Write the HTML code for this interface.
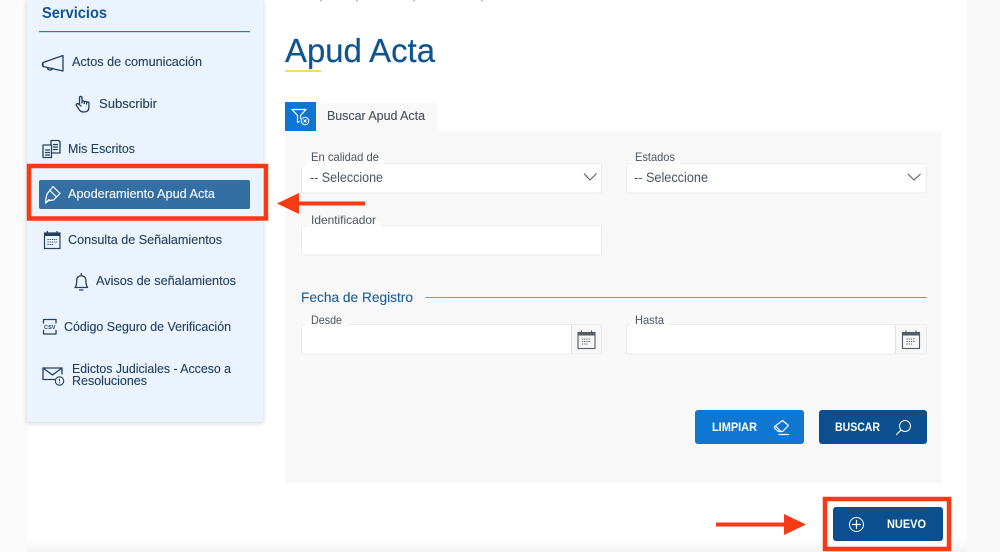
<!DOCTYPE html>
<html lang="es">
<head>
<meta charset="utf-8">
<title>Apud Acta</title>
<style>
html,body{margin:0;padding:0;width:1000px;height:552px;overflow:hidden;background:#fff}
svg{display:block;position:absolute;left:0;top:0}
text{font-family:"Liberation Sans",sans-serif;}
.m{font-size:13px;fill:#24405f;stroke:#24405f;stroke-width:.12}
.l{font-size:12px;fill:#4d5560}
.s{font-size:13.5px;fill:#4a5460}
.b{font-size:12px;font-weight:bold;fill:#fff}
.i{fill:none;stroke:#24405f;stroke-width:1.3;stroke-linejoin:round;stroke-linecap:round}
.g{fill:none;stroke:#5a6068;stroke-width:1.1}
.w{fill:none;stroke:#fff;stroke-width:1.2;stroke-linecap:round;stroke-linejoin:round}
</style>
</head>
<body>
<svg width="1000" height="552" viewBox="0 0 1000 552" xmlns="http://www.w3.org/2000/svg">
<defs>
<filter id="sh" x="-10%" y="-5%" width="120%" height="110%"><feGaussianBlur stdDeviation="2.5"/></filter>
<linearGradient id="bt" x1="0" y1="0" x2="0" y2="1"><stop offset="0" stop-color="#f6f6f6" stop-opacity="0"/><stop offset="1" stop-color="#f3f3f3"/></linearGradient>
<g id="cal">
<rect x="0.5" y="2.5" width="17" height="16" fill="none" stroke="#555c64" stroke-width="1.1"/>
<rect x="0.5" y="2.5" width="17" height="3" fill="#555c64"/>
<path d="M4 0.5v3M14 0.5v3" stroke="#555c64" stroke-width="1.1"/>
<path d="M4.500 9h9M4.500 11.500h9M4.500 14h6" stroke="#555c64" stroke-width="1.1" stroke-dasharray="1.200 1"/>
</g>
</defs>

<!-- page backdrop -->
<rect x="0" y="0" width="27" height="552" fill="#fafafa"/>
<rect x="967" y="0" width="33" height="552" fill="#f9f9f9"/>
<rect x="27" y="538" width="940" height="14" fill="url(#bt)"/>

<!-- breadcrumb remnants -->
<path d="M321 0v1.500M357 0v1.500M414 0v1.500M482 0v1.500" stroke="#8a8f96" stroke-width="1"/>

<!-- sidebar -->
<rect x="27" y="0" width="236" height="423" fill="#9aa3ad" opacity=".5" filter="url(#sh)"/>
<rect x="27" y="0" width="236" height="422" fill="#ebf4fe"/>
<text x="42" y="18" font-size="16" font-weight="bold" fill="#12558f" textLength="65" lengthAdjust="spacingAndGlyphs">Servicios</text>
<rect x="39" y="31" width="211" height="1.200" fill="#2f78b0"/>

<!-- megaphone -->
<path class="i" d="M43 62.500 63 55.500v15.500L43 66.500zM43 62.500c-.8 1-.8 3 0 4M47.500 67.500c0 3 4.500 3.500 5 .8"/>
<text class="m" x="72" y="66" textLength="130" lengthAdjust="spacingAndGlyphs">Actos de comunicación</text>

<!-- hand -->
<path class="i" d="M79.500 104V97.800c0-1.800 2.500-1.800 2.500 0v5.200M82 102c0-1.500 2.300-1.500 2.300 0v1.500M84.300 102.500c0-1.500 2.300-1.500 2.300 0v1.500M86.600 103c0-1.400 2.300-1.400 2.300 0v4c0 3.500-2 5-5 5-2.800 0-4-1-5.500-3.500l-2-3c-.8-1.500 1-2.500 2-1.500l2.700 2"/>
<text class="m" x="99" y="108" textLength="58" lengthAdjust="spacingAndGlyphs">Subscribir</text>

<!-- documents -->
<path class="i" d="M43 145h8.500v12.500H43zM45.500 150h4M45.500 152.500h4M45.500 155h4M51 145v-4.500h7.500l1.500 1.500v11h-8M53.500 144.500h4M53.500 147h4M53.500 149.500h4"/>
<text class="m" x="68" y="153" textLength="67" lengthAdjust="spacingAndGlyphs">Mis Escritos</text>

<!-- active item -->
<rect x="39" y="180" width="211" height="29" rx="2" fill="#336fa3"/>
<path class="w" d="M53 186.500l7 7-6.500 6.500-4.500.5-3.500 2.500.5-4.500 1-4.500zM49.500 190l7 7M45.500 203l3.500-3.500"/>
<text x="68" y="198" font-size="13" fill="#fff" stroke="#fff" stroke-width=".1" textLength="147" lengthAdjust="spacingAndGlyphs">Apoderamiento Apud Acta</text>

<!-- calendar nav -->
<g transform="translate(44,231)">
<rect x="0.500" y="2" width="15.500" height="15.500" fill="none" stroke="#24405f" stroke-width="1.200"/>
<rect x="0.500" y="2" width="15.500" height="3" fill="#24405f"/>
<path d="M3.500 0v3M13 0v3" stroke="#24405f" stroke-width="1.100"/>
<path d="M3.500 8.500h9.500M3.500 11h9.500M3.500 13.500h6" stroke="#24405f" stroke-width="1" stroke-dasharray="1.200 1"/>
</g>
<text class="m" x="68" y="244" textLength="154" lengthAdjust="spacingAndGlyphs">Consulta de Señalamientos</text>

<!-- bell -->
<path class="i" d="M75 287.500c2-2 1.500-5.500 1.800-8 .3-5 8.500-5 9 0 .3 2.500-.2 6 1.800 8zM79.500 290h3.500M81.300 273.500v1"/>
<text class="m" x="96" y="285" textLength="140" lengthAdjust="spacingAndGlyphs">Avisos de señalamientos</text>

<!-- csv -->
<path class="i" d="M43.500 323v-3.500h12.500v3.500M43.500 330.500v3.500h12.500v-3.500"/>
<text x="44" y="329" font-size="5.500" font-weight="bold" fill="#24405f" textLength="11.500">CSV</text>
<text class="m" x="64" y="331" textLength="167" lengthAdjust="spacingAndGlyphs">Código Seguro de Verificación</text>

<!-- mail -->
<path class="i" d="M55 379.500H43v-11.500h19v6M43 368l9.500 7 9.500-7"/>
<circle cx="59.500" cy="381" r="4.200" fill="none" stroke="#24405f" stroke-width="1.100"/>
<path d="M59.500 378.800v2.600M59.500 382.300v.9" stroke="#24405f" stroke-width="1"/>
<text class="m" x="72" y="373" textLength="159" lengthAdjust="spacingAndGlyphs">Edictos Judiciales - Acceso a</text>
<text class="m" x="72" y="385" textLength="75" lengthAdjust="spacingAndGlyphs">Resoluciones</text>

<!-- title -->
<text x="285" y="62" font-size="33" fill="#10548f" stroke="#10548f" stroke-width=".2" textLength="150" lengthAdjust="spacingAndGlyphs">Apud Acta</text>
<rect x="285" y="70" width="36" height="2" fill="#f6d873"/>

<!-- tab + panel -->
<rect x="285" y="131" width="657" height="352" fill="#f8f8f9"/>
<rect x="316" y="103" width="121" height="28" fill="#f8f8f9"/>
<rect x="285" y="102" width="31" height="29" fill="#0f75d2"/>
<path class="w" d="M292 109.500h14l-5.500 6v3M292 109.500l5.500 6v7l2-1" stroke-width="1"/>
<circle cx="305" cy="121" r="3.800" fill="none" stroke="#fff" stroke-width="1"/>
<path d="M303.500 119.500l3 3M306.500 119.500l-3 3" stroke="#fff" stroke-width=".9"/>
<text class="m" x="327" y="120" style="fill:#47505c;stroke:#47505c" textLength="98" lengthAdjust="spacingAndGlyphs">Buscar Apud Acta</text>

<!-- fields row 1 -->
<rect x="301.500" y="163.500" width="300" height="29.500" rx="2" fill="#fff" stroke="#ebebeb"/>
<rect x="306" y="160" width="79" height="5" fill="#fbfbfb"/>
<text class="l" x="311" y="161" textLength="68" lengthAdjust="spacingAndGlyphs">En calidad de</text>
<text class="s" x="310" y="182" textLength="73" lengthAdjust="spacingAndGlyphs">-- Seleccione</text>
<path class="g" d="M584 173.500l6 6.500 6.500-6.500"/>

<rect x="626.500" y="163.500" width="300" height="29.500" rx="2" fill="#fff" stroke="#ebebeb"/>
<rect x="631" y="160" width="49" height="5" fill="#fbfbfb"/>
<text class="l" x="635" y="161" textLength="40" lengthAdjust="spacingAndGlyphs">Estados</text>
<text class="s" x="634" y="182" textLength="74" lengthAdjust="spacingAndGlyphs">-- Seleccione</text>
<path class="g" d="M908 174l6 6 6.500-6"/>

<!-- identificador -->
<rect x="301.500" y="225.500" width="300" height="29.500" rx="2" fill="#fff" stroke="#ebebeb"/>
<rect x="306" y="222" width="75" height="5" fill="#fbfbfb"/>
<text class="l" x="311" y="224" textLength="65" lengthAdjust="spacingAndGlyphs">Identificador</text>

<!-- fecha -->
<text x="301" y="302" font-size="14" fill="#1b5d97" stroke="#1b5d97" stroke-width=".1" textLength="112" lengthAdjust="spacingAndGlyphs">Fecha de Registro</text>
<rect x="425" y="297" width="502" height="1" fill="#6f9cc0"/>

<rect x="301.500" y="324.500" width="300" height="29.500" rx="2" fill="#fff" stroke="#ebebeb"/>
<path d="M572 325h29v28.500h-29z" fill="#f7f7f7"/>
<path d="M571.500 325v29" stroke="#e0e0e0"/>
<rect x="306" y="321" width="42" height="5" fill="#fbfbfb"/>
<text class="l" x="311" y="324" textLength="31" lengthAdjust="spacingAndGlyphs">Desde</text>
<use href="#cal" x="577.500" y="330"/>

<rect x="626.500" y="324.500" width="300" height="29.500" rx="2" fill="#fff" stroke="#ebebeb"/>
<path d="M896 325h30v28.500h-30z" fill="#f7f7f7"/>
<path d="M895.500 325v29" stroke="#e0e0e0"/>
<rect x="631" y="321" width="38" height="5" fill="#fbfbfb"/>
<text class="l" x="635" y="324" textLength="29" lengthAdjust="spacingAndGlyphs">Hasta</text>
<use href="#cal" x="902" y="330"/>

<!-- buttons -->
<rect x="695" y="410" width="109" height="34" rx="3" fill="#0f76d1"/>
<text class="b" x="712" y="431" textLength="45" lengthAdjust="spacingAndGlyphs">LIMPIAR</text>
<path class="w" d="M782.500 420.500l6 5-6 6h-4l-3.500-3c-.8-.8-.8-1.500 0-2.300zM775.500 426l5.500 5.500M779 434.500h9.500" stroke-width="1"/>

<rect x="819" y="410" width="108" height="34" rx="3" fill="#0b4f8e"/>
<text class="b" x="835" y="431" textLength="45" lengthAdjust="spacingAndGlyphs">BUSCAR</text>
<circle cx="905" cy="426" r="5.500" fill="none" stroke="#fff" stroke-width="1"/>
<path class="w" d="M901 430l-4.500 4.500" stroke-width="1"/>

<rect x="833" y="507" width="110" height="34" rx="3" fill="#0b4f8e"/>
<circle cx="856.500" cy="524.500" r="7" fill="none" stroke="#fff" stroke-width="1"/>
<path class="w" d="M856.500 520.500v8M852.500 524.500h8" stroke-width="1"/>
<text class="b" x="887" y="528" textLength="39" lengthAdjust="spacingAndGlyphs">NUEVO</text>

<!-- annotations -->
<rect x="29" y="166" width="237" height="52.500" fill="none" stroke="#f63a13" stroke-width="4.500"/>
<rect x="825" y="499" width="124" height="50" fill="none" stroke="#f63a13" stroke-width="4.500"/>
<path d="M277 203.500 299 193v8.500h66v4h-66V214z" fill="#f63a13"/>
<path d="M806 524.500 784 514v8.500h-68v4h68V535z" fill="#f63a13"/>
</svg>
</body>
</html>
